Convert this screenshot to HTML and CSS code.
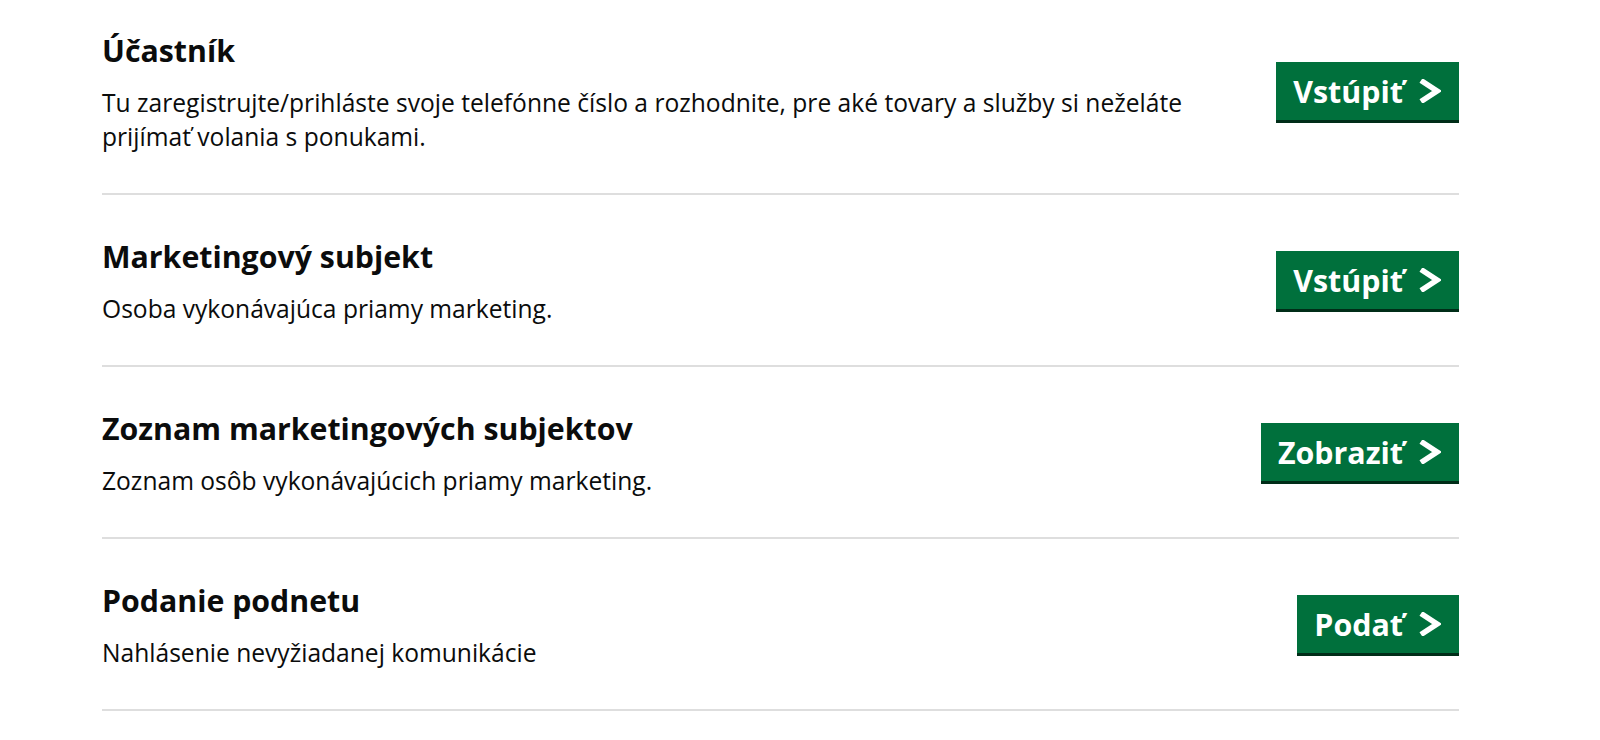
FILE: index.html
```html
<!DOCTYPE html>
<html lang="sk">
<head>
<meta charset="utf-8">
<title>Účastník</title>
<link rel="stylesheet" href="styles.css">
</head>
<body>
<main class="page">
  <section class="row row-first">
    <div class="text">
      <h2 class="title">Účastník</h2>
      <p class="desc">Tu zaregistrujte/prihláste svoje telefónne číslo a rozhodnite, pre aké tovary a služby si neželáte prijímať volania s ponukami.</p>
    </div>
    <a class="btn" href="#">Vstúpiť<svg class="chev" viewBox="0 0 23 24" aria-hidden="true"><path d="M3 1.5 L19 12 L3 22.5"/></svg></a>
  </section>
  <section class="row">
    <div class="text">
      <h2 class="title">Marketingový subjekt</h2>
      <p class="desc">Osoba vykonávajúca priamy marketing.</p>
    </div>
    <a class="btn" href="#">Vstúpiť<svg class="chev" viewBox="0 0 23 24" aria-hidden="true"><path d="M3 1.5 L19 12 L3 22.5"/></svg></a>
  </section>
  <section class="row">
    <div class="text">
      <h2 class="title">Zoznam marketingových subjektov</h2>
      <p class="desc">Zoznam osôb vykonávajúcich priamy marketing.</p>
    </div>
    <a class="btn" href="#">Zobraziť<svg class="chev" viewBox="0 0 23 24" aria-hidden="true"><path d="M3 1.5 L19 12 L3 22.5"/></svg></a>
  </section>
  <section class="row">
    <div class="text">
      <h2 class="title">Podanie podnetu</h2>
      <p class="desc">Nahlásenie nevyžiadanej komunikácie</p>
    </div>
    <a class="btn" href="#">Podať<svg class="chev" viewBox="0 0 23 24" aria-hidden="true"><path d="M3 1.5 L19 12 L3 22.5"/></svg></a>
  </section>
</main>
</body>
</html>
```
FILE: styles.css
```css
html, body {
  margin: 0;
  padding: 0;
  background: #ffffff;
}
body {
  font-family: "Open Sans", "Noto Sans", sans-serif;
  color: #0b0c0c;
}
.page {
  width: 1357px;
  margin-left: 102px;
}
.row {
  display: flex;
  align-items: center;
  justify-content: space-between;
  padding: 42px 0 39px;
  border-bottom: 2px solid #dedede;
}
.row-first {
  padding-top: 31px;
}
.text {
  max-width: 1120px;
}
.title {
  margin: 0 0 15px;
  font-size: 30.3px;
  line-height: 40px;
  font-weight: 700;
}
.desc {
  margin: 0;
  font-size: 24.6px;
  line-height: 34px;
  font-weight: 400;
}
.btn {
  display: flex;
  align-items: center;
  gap: 15px;
  height: 58px;
  padding: 0 18px 0 17px;
  background: #00703c;
  box-shadow: 0 3px 0 #002d18;
  color: #ffffff;
  text-decoration: none;
  font-size: 30.4px;
  font-weight: 700;
  margin-bottom: 3px;
}
.chev {
  width: 23px;
  height: 24px;
  fill: none;
  stroke: #ffffff;
  stroke-width: 5.5;
}
```
